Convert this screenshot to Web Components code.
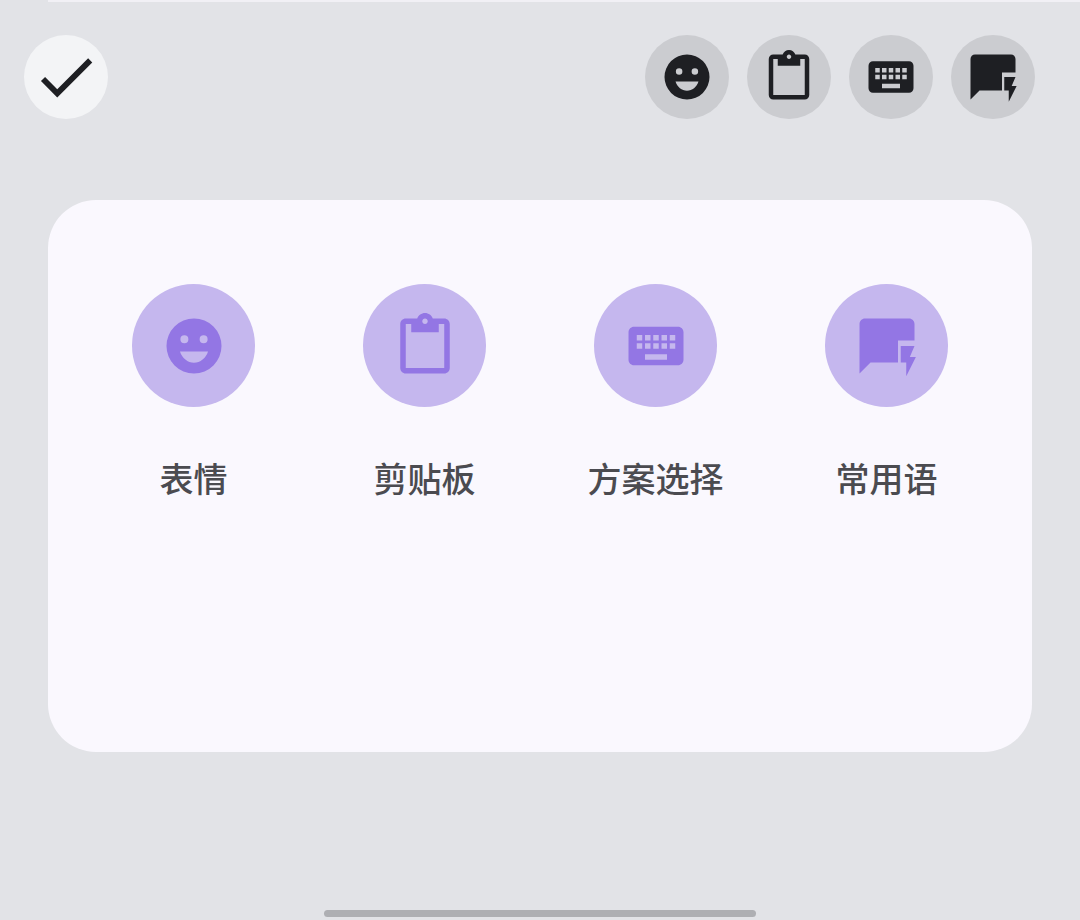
<!DOCTYPE html>
<html lang="zh">
<head>
<meta charset="utf-8">
<style>
  html, body { margin: 0; height: 100%; }
  body { background: #e2e3e7; font-family: "Noto Sans CJK SC", "Noto Sans", sans-serif; }
</style>
</head>
<body>
<keyboard-panel>
  <tool-button slot="left" icon="check" active></tool-button>
  <tool-button slot="right" icon="face"></tool-button>
  <tool-button slot="right" icon="clipboard"></tool-button>
  <tool-button slot="right" icon="keyboard"></tool-button>
  <tool-button slot="right" icon="quickreply"></tool-button>
  <feature-item slot="items" icon="face">表情</feature-item>
  <feature-item slot="items" icon="clipboard">剪贴板</feature-item>
  <feature-item slot="items" icon="keyboard">方案选择</feature-item>
  <feature-item slot="items" icon="quickreply">常用语</feature-item>
</keyboard-panel>

<script>
  const ICONS = {
    check: 'M9 16.17L4.83 12l-1.41 1.41L9 19 21 7l-1.41-1.41z',
    face: 'M12 2a10 10 0 1 0 0 20 10 10 0 0 0 0-20zM8.5 8.1a1.45 1.45 0 1 1 0 2.9 1.45 1.45 0 0 1 0-2.9zm7 0a1.45 1.45 0 1 1 0 2.9 1.45 1.45 0 0 1 0-2.9zM6.9 14h10.2c-.75 2.4-2.8 4.1-5.1 4.1S7.65 16.4 6.9 14z',
    clipboard: 'M19 2h-4.18C14.4.84 13.3 0 12 0c-1.3 0-2.4.84-2.82 2H5c-1.1 0-2 .9-2 2v16c0 1.1.9 2 2 2h14c1.1 0 2-.9 2-2V4c0-1.1-.9-2-2-2zm-7 0c.55 0 1 .45 1 1s-.45 1-1 1-1-.45-1-1 .45-1 1-1zm7 18H5V4h2v3h10V4h2v16z',
    keyboard: 'M20 5H4c-1.1 0-1.99.9-1.99 2L2 17c0 1.1.9 2 2 2h16c1.1 0 2-.9 2-2V7c0-1.1-.9-2-2-2zm-9 3h2v2h-2V8zm0 3h2v2h-2v-2zM8 8h2v2H8V8zm0 3h2v2H8v-2zm-1 2H5v-2h2v2zm0-3H5V8h2v2zm9 7H8v-2h8v2zm0-4h-2v-2h2v2zm0-3h-2V8h2v2zm3 3h-2v-2h2v2zm0-3h-2V8h2v2z',
    quickreply: 'M22 4c0-1.1-.9-2-2-2H4c-1.1 0-1.99.9-1.99 2L2 22l4-4h10v-8h6V4zM22.5 16h-2.2l1.7-4h-5v6h2v5z'
  };

  const iconSvg = (name, size) =>
    `<svg width="${size}" height="${size}" viewBox="0 0 24 24" fill="currentColor"><path fill-rule="evenodd" d="${ICONS[name]}"/></svg>`;

  class ToolButton extends HTMLElement {
    constructor() {
      super();
      this.attachShadow({ mode: 'open' });
    }
    connectedCallback() {
      const active = this.hasAttribute('active');
      this.shadowRoot.innerHTML = `
        <style>
          :host {
            display: flex;
            align-items: center;
            justify-content: center;
            width: 84px;
            height: 84px;
            border-radius: 50%;
            color: #1e1f23;
            background: ${active ? '#f3f4f6' : '#cbccd0'};
          }
          svg { display: block; }
        </style>
        ${iconSvg(this.getAttribute('icon'), active ? 70 : 54)}
      `;
    }
  }

  class FeatureItem extends HTMLElement {
    constructor() {
      super();
      this.attachShadow({ mode: 'open' });
    }
    connectedCallback() {
      this.shadowRoot.innerHTML = `
        <style>
          :host {
            display: flex;
            flex-direction: column;
            align-items: center;
          }
          .circle {
            display: flex;
            align-items: center;
            justify-content: center;
            width: 123px;
            height: 123px;
            border-radius: 50%;
            background: #c5b7ee;
            color: #9376e4;
          }
          svg { display: block; }
          .label {
            margin-top: 46px;
            font-size: 34px;
            font-weight: 500;
            line-height: 50px;
            color: #4b4b50;
            white-space: nowrap;
          }
        </style>
        <div class="circle">${iconSvg(this.getAttribute('icon'), 66)}</div>
        <div class="label"><slot></slot></div>
      `;
    }
  }

  class KeyboardPanel extends HTMLElement {
    constructor() {
      super();
      this.attachShadow({ mode: 'open' });
    }
    connectedCallback() {
      this.shadowRoot.innerHTML = `
        <style>
          :host {
            display: flex;
            flex-direction: column;
            height: 920px;
            box-sizing: border-box;
          }
          .edge {
            height: 2px;
            margin-left: 48px;
            background: #f1f0f5;
          }
          .toolbar {
            display: flex;
            justify-content: space-between;
            padding: 33px 45px 0 24px;
          }
          .right { display: flex; gap: 18px; }
          .card {
            height: 552px;
            margin: 81px 48px 0;
            padding: 84px 30px 0;
            box-sizing: border-box;
            border-radius: 48px;
            background: #faf8fe;
          }
          .grid {
            display: grid;
            grid-template-columns: repeat(4, 1fr);
          }
          .spacer { flex: 1; }
          .home {
            width: 432px;
            height: 7px;
            margin: 0 auto 3px;
            border-radius: 4px;
            background: #aeafb3;
          }
        </style>
        <div class="edge"></div>
        <div class="toolbar">
          <slot name="left"></slot>
          <div class="right"><slot name="right"></slot></div>
        </div>
        <div class="card">
          <div class="grid"><slot name="items"></slot></div>
        </div>
        <div class="spacer"></div>
        <div class="home"></div>
      `;
    }
  }

  customElements.define('tool-button', ToolButton);
  customElements.define('feature-item', FeatureItem);
  customElements.define('keyboard-panel', KeyboardPanel);
</script>
</body>
</html>
